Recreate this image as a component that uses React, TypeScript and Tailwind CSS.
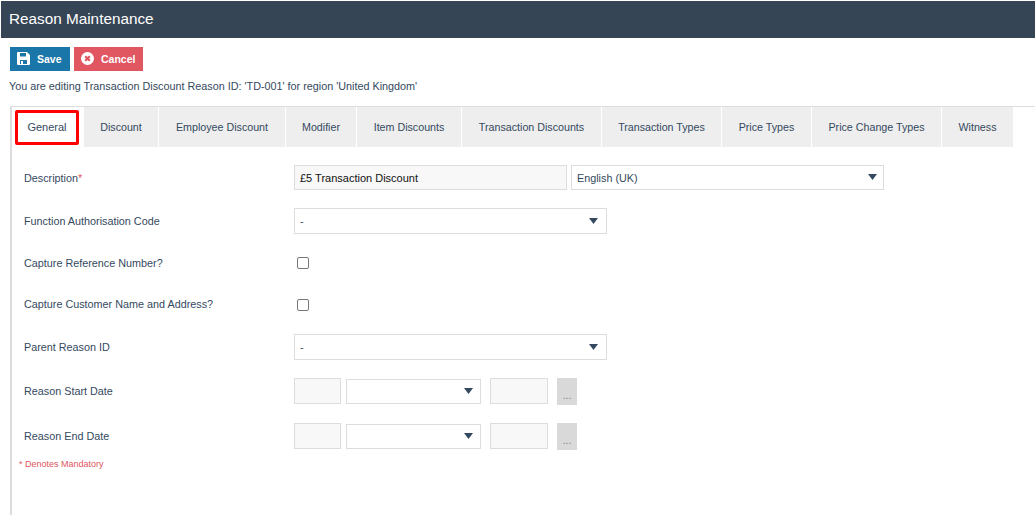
import React from "react";

const tabs = [
  ["Discount", "w-[75px]"],
  ["Employee Discount", "w-[127px]"],
  ["Modifier", "w-[71px]"],
  ["Item Discounts", "w-[105px]"],
  ["Transaction Discounts", "w-[140px]"],
  ["Transaction Types", "w-[120px]"],
  ["Price Types", "w-[90px]"],
  ["Price Change Types", "w-[130px]"],
  ["Witness", "w-[71px]"],
];

function Caret({ className = "" }: { className?: string }) {
  return (
    <svg width="9" height="6" viewBox="0 0 9 6" className={`-mt-[1px] ${className}`}>
      <path d="M0 0H9L4.5 6Z" fill="#34495e" />
    </svg>
  );
}

function Select({ text, className }: { text?: string; className: string }) {
  return (
    <div className={`flex items-center justify-between border border-[#ddd] bg-white pl-[5px] text-[10.8px] text-[#34495e] ${className}`}>
      <span className="mt-px">{text}</span>
      <Caret />
    </div>
  );
}

function Row({ label, req, className, labelClass = "", children }: { label: string; req?: boolean; className: string; labelClass?: string; children: React.ReactNode }) {
  return (
    <div className={`flex items-center ${className}`}>
      <div className={`w-[270px] shrink-0 text-[10.8px] text-[#34495e] ${labelClass}`}>
        {label}
        {req && <span className="text-[#e05661]">*</span>}
      </div>
      {children}
    </div>
  );
}

function DateGroup() {
  return (
    <div className="flex items-start">
      <div className="h-[26px] w-[47px] border border-[#ddd] bg-[#f8f8f8]" />
      <Select className="mt-px ml-[5px] h-[25px] w-[135px] pr-[7px]" />
      <div className="ml-[9px] h-[26px] w-[58px] border border-[#ddd] bg-[#f8f8f8]" />
      <div className="ml-[9px] flex h-[27px] w-[20px] items-end justify-center bg-[#d9d9d9] pb-[3px] text-[10px] leading-[12px] text-[#777]">...</div>
    </div>
  );
}

export default function App() {
  return (
    <div className="h-[515px] w-[1035px] overflow-hidden bg-white font-['Liberation_Sans',Arial,sans-serif]">
      <div className="ml-px mt-px flex h-[37px] items-center bg-[#364555] pl-[8px] text-[15.3px] text-white">Reason Maintenance</div>
      <div className="ml-[10px] mt-[9px] flex gap-[4px]">
        <button className="flex h-[24px] w-[60px] items-center bg-[#1a76a8] pl-[7px] text-[10.5px] font-bold text-white">
          <svg width="13" height="13" viewBox="0 0 13 13" className="-mt-[2px]">
            <path fillRule="evenodd" d="M0 1a1 1 0 0 1 1-1h9l3 3v9a1 1 0 0 1-1 1H1a1 1 0 0 1-1-1ZM3 1v3.5h6V1ZM3 8v4h7V8Z" fill="#fff" />
            <rect x="4" y="9" width="2" height="3" fill="#fff" />
          </svg>
          <span className="ml-[7px] mt-px">Save</span>
        </button>
        <button className="flex h-[24px] w-[69px] items-center bg-[#e05661] pl-[7px] text-[10.5px] font-bold text-white">
          <svg width="13" height="13" viewBox="0 0 13 13" className="-mt-[2px]">
            <circle cx="6.5" cy="6.5" r="6.5" fill="#fff" />
            <path d="M4.2 4.2L8.8 8.8M8.8 4.2L4.2 8.8" stroke="#e05661" strokeWidth="2.2" />
          </svg>
          <span className="ml-[7px] mt-px">Cancel</span>
        </button>
      </div>
      <div className="ml-[9px] mt-[8px] text-[10.8px] leading-[14px] text-[#34495e]">You are editing Transaction Discount Reason ID: 'TD-001' for region 'United Kingdom'</div>
      <div className="ml-[10px] mt-[13px] h-[409px] border-l-2 border-t border-[#ddd]">
        <div className="flex h-[40px]">
          <div className="ml-[3px] mt-[3px] flex h-[35px] w-[64px] items-center justify-center rounded-[2px] border-[3px] border-[#f00] bg-white text-[11px] font-normal text-[#34495e]">General</div>
          <div className="flex">
            <div className="w-[5px]" />
            {tabs.map(([t, w]) => (
              <div key={t} className={`flex h-[40px] items-center justify-center border-r border-white bg-[#eee] text-[10.7px] text-[#34495e] last:border-r-0 ${w}`}>{t}</div>
            ))}
          </div>
        </div>
        <div className="mt-[18px] pl-[12px]">
          <Row label="Description" req className="h-[25px]" labelClass="mt-[2px]">
            <div className="flex h-[25px] w-[273px] items-center border border-[#ddd] bg-[#f8f8f8] pl-[5px] text-[11px] text-[#111]"><span className="mt-px">£5 Transaction Discount</span></div>
            <Select text="English (UK)" className="ml-[4px] h-[25px] w-[313px] pr-[6px]" />
          </Row>
          <Row label="Function Authorisation Code" className="mt-[18px] h-[26px]">
            <Select text="-" className="h-[26px] w-[313px] pr-[8px]" />
          </Row>
          <Row label="Capture Reference Number?" className="mt-[23px] h-[12px]">
            <div className="ml-[3px] h-[12px] w-[12px] rounded-[2px] border border-[#777] bg-white" />
          </Row>
          <Row label="Capture Customer Name and Address?" className="mt-[30px] h-[12px]" labelClass="-mt-[2px]">
            <div className="ml-[3px] h-[12px] w-[12px] rounded-[2px] border border-[#777] bg-white" />
          </Row>
          <Row label="Parent Reason ID" className="mt-[23px] h-[26px]" labelClass="mt-px">
            <Select text="-" className="h-[26px] w-[313px] pr-[8px]" />
          </Row>
          <Row label="Reason Start Date" className="mt-[18px] h-[27px]">
            <DateGroup />
          </Row>
          <Row label="Reason End Date" className="mt-[18px] h-[27px]">
            <DateGroup />
          </Row>
          <div className="-ml-[5px] mt-[8px] text-[9px] leading-[12px] text-[#e05661]">* Denotes Mandatory</div>
        </div>
      </div>
    </div>
  );
}
